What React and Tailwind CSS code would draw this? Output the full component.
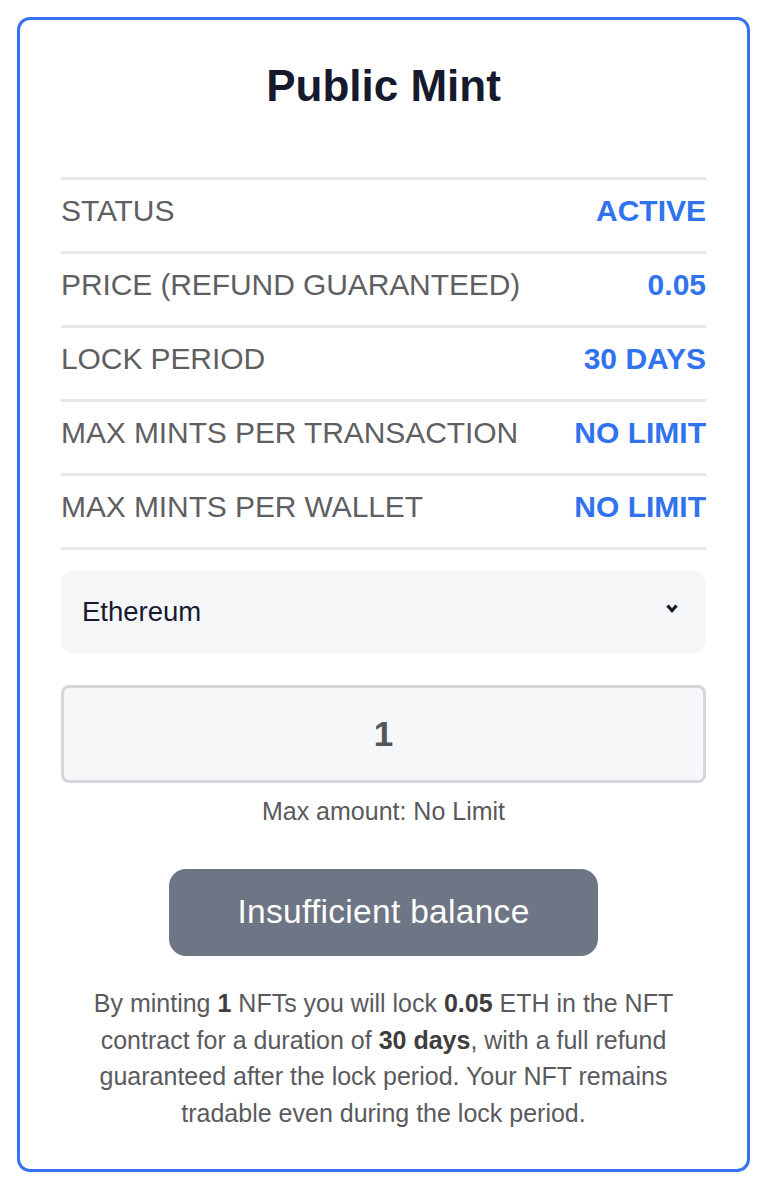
import React from 'react';

const rows = [
  { label: 'STATUS', value: 'ACTIVE' },
  { label: 'PRICE (REFUND GUARANTEED)', value: '0.05' },
  { label: 'LOCK PERIOD', value: '30 DAYS' },
  { label: 'MAX MINTS PER TRANSACTION', value: 'NO LIMIT' },
  { label: 'MAX MINTS PER WALLET', value: 'NO LIMIT' },
];

function App() {
  return (
    <div className="min-h-screen bg-white pt-[17px] pl-[17px] pr-[20px] pb-[12px] font-['Liberation_Sans',Arial,sans-serif]">
      <div className="border-[3px] border-[#3573f0] rounded-[13px] px-[41px] pt-[44px] pb-[38px]">
        {/* Title */}
        <h1 className="text-center text-[44px] leading-none font-bold text-[#171a2e]">Public Mint</h1>

        {/* Info rows */}
        <div className="mt-[69px] border-b-[3px] border-[#e5e7eb]">
          {rows.map((row) => (
            <div
              key={row.label}
              className="h-[74px] border-t-[3px] border-[#e5e7eb] flex items-center justify-between pb-[11px]"
            >
              <span className="text-[30px] tracking-[-0.1px] text-[#5f5f63]">{row.label}</span>
              <span className="text-[30px] font-bold text-[#3172ef]">{row.value}</span>
            </div>
          ))}
        </div>

        {/* Network select */}
        <div className="mt-[21px] h-[82px] rounded-[12px] bg-[#f5f6f8] flex items-center justify-between pl-[21px] pr-[28px]">
          <span className="text-[27.5px] text-[#171a2e]">Ethereum</span>
          <svg width="12" height="9" viewBox="0 0 12 9" className="-mt-[8px]">
            <path d="M1.5 1.5 L6 6.5 L10.5 1.5" fill="none" stroke="#171a2e" strokeWidth="3.2" />
          </svg>
        </div>

        {/* Amount input */}
        <div className="mt-[32px] h-[98px] rounded-[8px] border-[3px] border-[#d5d6d9] bg-[#f6f7f9] flex items-center justify-center">
          <span className="text-[35px] font-bold text-[#555558]">1</span>
        </div>
        <p className="mt-[14px] text-center text-[25px] leading-[28px] text-[#59595c]">Max amount: No Limit</p>

        {/* Mint button */}
        <div className="mt-[44px] flex justify-center">
          <button className="w-[429px] h-[87px] rounded-[17px] bg-[#6e7585] text-white text-[33.5px] tracking-[0.3px]">
            Insufficient balance
          </button>
        </div>

        {/* Note */}
        <p className="mt-[29px] mx-auto max-w-[600px] text-center text-[25px] leading-[36.5px] text-[#5a5a5e]">
          By minting <span className="font-bold text-[#3d3d40]">1</span> NFTs you will lock <span className="font-bold text-[#3d3d40]">0.05</span> ETH in the NFT contract for a duration of <span className="font-bold text-[#3d3d40]">30 days</span>, with a full refund guaranteed after the lock period. Your NFT remains tradable even during the lock period.
        </p>
      </div>
    </div>
  );
}

export default App;
